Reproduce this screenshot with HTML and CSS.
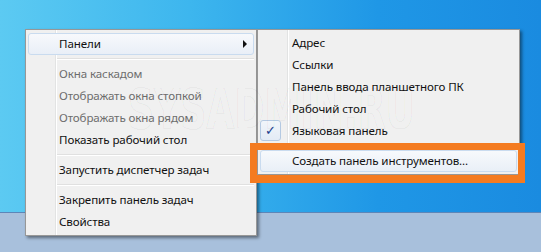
FILE: index.html
```html
<!DOCTYPE html>
<html lang="ru">
<head>
    <meta charset="UTF-8">
    <title>Панели</title>
    <link rel="stylesheet" href="styles.css">
</head>
<body>
    <div class="desktop">
        <div class="taskbar"></div>

        <!-- Main context menu -->
        <div class="menu menu-main">
            <div class="item active">Панели<span class="arrow"></span></div>
            <div class="sep"></div>
            <div class="item disabled">Окна каскадом</div>
            <div class="item disabled">Отображать окна стопкой</div>
            <div class="item disabled">Отображать окна рядом</div>
            <div class="item">Показать рабочий стол</div>
            <div class="sep"></div>
            <div class="item">Запустить диспетчер задач</div>
            <div class="sep"></div>
            <div class="item">Закрепить панель задач</div>
            <div class="item">Свойства</div>
        </div>

        <!-- Toolbars submenu -->
        <div class="menu menu-sub">
            <div class="item">Адрес</div>
            <div class="item">Ссылки</div>
            <div class="item">Панель ввода планшетного ПК</div>
            <div class="item">Рабочий стол</div>
            <div class="item checked"><span class="check">&#10003;</span>Языковая панель</div>
            <div class="sep"></div>
            <div class="item active">Создать панель инструментов...</div>
        </div>

        <div class="watermark">SYSADMIN.RU</div>
        <div class="mark"></div>
    </div>
</body>
</html>
```

FILE: styles.css
```css
body {
    margin: 0;
    font-family: "Noto Sans", "Open Sans", sans-serif;
    font-size: 11.6px;
    letter-spacing: -0.12px;
}

.desktop {
    position: relative;
    width: 541px;
    height: 252px;
    overflow: hidden;
    display: flex;
    flex-direction: column;
    justify-content: flex-end;
    background: linear-gradient(to right, #5ccaf2 0%, #3db6ee 35%, #1f97e6 70%, #1a8be0 100%);
}

.taskbar {
    height: 39px;
    border-top: 1px solid #5d86b8;
    background-color: #a8c0dc;
}

.menu {
    position: absolute;
    box-sizing: border-box;
    padding: 3px 0 2px;
    border: 1px solid #979797;
    box-shadow: 2px 2px 3px rgba(0, 0, 0, 0.45);
    background: linear-gradient(to right, transparent 29px, #e2e3e3 29px, #e2e3e3 30px, #fff 30px, #fff 31px, transparent 31px), #f0f0f0;
    color: #111;
}

.menu-main {
    left: 25px;
    top: 29px;
    width: 232px;
}

.menu-sub {
    left: 257px;
    top: 29px;
    width: 263px;
    padding-top: 2px;
}

.item {
    position: relative;
    height: 20px;
    line-height: 20px;
    margin: 0 2px;
    padding-left: 30px;
    border: 1px solid transparent;
    border-radius: 3px;
    white-space: nowrap;
}

.menu-sub .item {
    padding-left: 31px;
}

.item.active {
    border-color: #c9dbef;
    background: linear-gradient(to bottom, #f7f9fc, #e9eff7);
}

.item.disabled {
    color: #6d6d6d;
}

.arrow {
    position: absolute;
    right: 6px;
    top: 6px;
    border-left: 4px solid #111;
    border-top: 4px solid transparent;
    border-bottom: 4px solid transparent;
}

.check {
    position: absolute;
    left: 0;
    top: 0;
    width: 19px;
    height: 19px;
    line-height: 19px;
    text-align: center;
    border: 1px solid #b4c9e2;
    border-radius: 3px;
    background: linear-gradient(to bottom, #f1f5fa, #e3ebf5);
    color: #1c3c8c;
    font-family: "DejaVu Sans", sans-serif;
    font-size: 13px;
    box-sizing: content-box;
    margin: -1px 0 0 -1px;
}

.sep {
    height: 0;
    margin: 3px 2px 3px 31px;
    border-top: 1px solid #e0e0e0;
    border-bottom: 1px solid #fff;
}

.watermark {
    position: absolute;
    left: 128px;
    top: 76px;
    font-family: "DejaVu Sans Condensed", "DejaVu Sans", sans-serif;
    font-weight: bold;
    font-size: 56px;
    color: transparent;
    -webkit-text-stroke: 1px rgba(0, 0, 0, 0.055);
    transform: scaleX(0.72);
    transform-origin: left top;
    pointer-events: none;
}

.mark {
    position: absolute;
    left: 250px;
    top: 143px;
    width: 261px;
    height: 25px;
    border: 7px solid #f47b20;
    border-bottom-width: 8px;
}
```
